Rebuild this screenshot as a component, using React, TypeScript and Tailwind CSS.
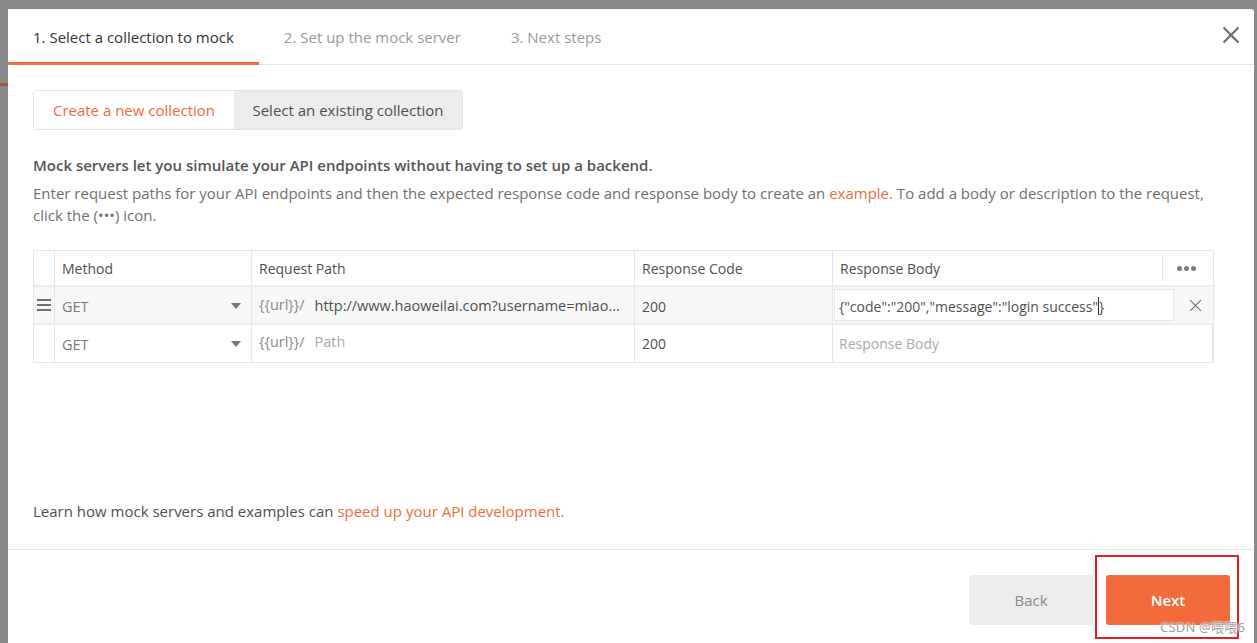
import React from "react";

const orange = "text-[#f26b3a]";

function CloseIcon({ size = 18, stroke = 2.2, color = "#6f6f6f" }: { size?: number; stroke?: number; color?: string }) {
  return (
    <svg width={size} height={size} viewBox="0 0 18 18" fill="none">
      <path d="M1.5 1.5L16.5 16.5M16.5 1.5L1.5 16.5" stroke={color} strokeWidth={stroke} strokeLinecap="butt" />
    </svg>
  );
}

function Caret() {
  return (
    <svg width="10" height="6" viewBox="0 0 10 6">
      <path d="M0 0H10L5 6Z" fill="#777" />
    </svg>
  );
}

export default function App() {
  return (
    <div
      className="relative w-[1257px] h-[643px] overflow-hidden bg-[#8a8a8a] flex pt-[9px] pl-[8px] pr-[3px]"
      style={{ fontFamily: '"Open Sans", "Noto Sans", sans-serif' }}
    >
      {/* faint backdrop hints on left strip */}
      <div className="absolute left-0 top-[83px] w-[8px] h-[3px] bg-[#a8583a]" />

      <div className="flex-1 bg-white rounded-tr-[3px] flex flex-col h-[700px]">
        {/* header tabs */}
        <div className="h-[56px] flex items-stretch border-b border-[#e6e6e6] shrink-0">
          <div className="px-[25px] flex items-center pt-[4px] border-b-[3px] border-[#f26b3a] -mb-px text-[15px] text-[#333]">
            1. Select a collection to mock
          </div>
          <div className="px-[25px] flex items-center pt-[2px] text-[15px] text-[#9a9a9a]">2. Set up the mock server</div>
          <div className="px-[25px] flex items-center pt-[2px] text-[15px] text-[#9a9a9a]">3. Next steps</div>
          <div className="flex-1" />
          <div className="flex items-center pr-[14px] pb-[3px]">
            <CloseIcon />
          </div>
        </div>

        {/* body */}
        <div className="h-[484px] px-[25px] flex flex-col shrink-0">
          <div className="mt-[25px] flex w-[430px] h-[40px] border border-[#e3e3e3] rounded-[3px] text-[15px]">
            <div className={`w-[200px] flex items-center justify-center bg-white pt-[1px] ${orange}`}>Create a new collection</div>
            <div className="flex-1 flex items-center justify-center bg-[#ececec] text-[#505050] pt-[1px]">
              Select an existing collection
            </div>
          </div>

          <div className="mt-[24px] text-[15px] font-semibold text-[#555] leading-[22px]">
            Mock servers let you simulate your API endpoints without having to set up a backend.
          </div>
          <div className="mt-[6px] text-[15px] text-[#707070] leading-[22px]">
            Enter request paths for your API endpoints and then the expected response code and response body to create an{" "}
            <span className={orange}>example.</span> To add a body or description to the request, click the (•••) icon.
          </div>

          {/* table */}
          <div className="mt-[24px] w-[1181px] border border-[#e6e6e6] text-[14px]">
            {/* header */}
            <div className="grid grid-cols-[20px_197px_383px_198px_330px_51px] h-[36px] border-b-2 border-[#ececec] text-[#505050]">
              <div />
              <div className="border-l border-[#e6e6e6] flex items-center pl-[7px]">Method</div>
              <div className="border-l border-[#e6e6e6] flex items-center pl-[7px]">Request Path</div>
              <div className="border-l border-[#e6e6e6] flex items-center pl-[7px]">Response Code</div>
              <div className="border-l border-[#e6e6e6] flex items-center pl-[7px]">Response Body</div>
              <div className="flex items-center">
                <div className="w-px h-[26px] bg-[#e6e6e6]" />
                <div className="flex-1 flex items-center justify-center gap-[2px] pr-[3px]">
                  <span className="w-[5px] h-[5px] rounded-full bg-[#7a7a7a]" />
                  <span className="w-[5px] h-[5px] rounded-full bg-[#7a7a7a]" />
                  <span className="w-[5px] h-[5px] rounded-full bg-[#7a7a7a]" />
                </div>
              </div>
            </div>
            {/* row 1 */}
            <div className="grid grid-cols-[20px_197px_383px_198px_381px] h-[38px] border-b-2 border-[#ececec] bg-[#f7f7f7]">
              <div className="flex items-center justify-center">
                <div className="flex flex-col gap-[3px]">
                  <span className="w-[14px] h-[2px] bg-[#707070]" />
                  <span className="w-[14px] h-[2px] bg-[#707070]" />
                  <span className="w-[14px] h-[2px] bg-[#707070]" />
                </div>
              </div>
              <div className="border-l border-[#e6e6e6] flex items-center pl-[7px] pr-[10px] justify-between bg-[#f7f7f7] pt-[2px]">
                <span className="text-[#7a7a7a] text-[14.5px] mt-[2px]">GET</span>
                <Caret />
              </div>
              <div className="border-l border-[#e6e6e6] flex items-center pl-[7px] pr-[4px] gap-[10px] overflow-hidden whitespace-nowrap pt-[2px]">
                <span className="text-[#8a8a8a] text-[14.5px] -mt-[3px] shrink-0">{"{{url}}/"}</span>
                <span className="text-[#505050] text-[14.5px] truncate">http://www.haoweilai.com?username=miaomiao</span>
              </div>
              <div className="border-l border-[#e6e6e6] flex items-center pl-[7px] text-[#505050] pt-[2px]">200</div>
              <div className="border-l border-[#e6e6e6] flex items-center pl-[1px]">
                <div className="w-[340px] h-[32px] bg-white border border-[#e6e6e6] flex items-center pl-[4px] pt-[2px] text-[#505050]">
                  {'{"code":"200","message":"login success"'}
                  <span className="inline-block w-px h-[18px] bg-[#333]" />
                  {"}"}
                </div>
                <div className="flex-1 flex items-center justify-center pl-[4px]">
                  <CloseIcon size={13} stroke={1.6} color="#707070" />
                </div>
              </div>
            </div>
            {/* row 2 */}
            <div className="grid grid-cols-[20px_197px_383px_198px_381px] h-[37px] bg-white">
              <div />
              <div className="border-l border-[#e6e6e6] flex items-center pl-[7px] pr-[10px] justify-between">
                <span className="text-[#7a7a7a] text-[14.5px] mt-[2px]">GET</span>
                <Caret />
              </div>
              <div className="border-l border-[#e6e6e6] flex items-center pl-[7px] gap-[10px]">
                <span className="text-[#8a8a8a] text-[14.5px] -mt-[3px]">{"{{url}}/"}</span>
                <span className="text-[#aaaaaa] text-[14.5px] -mt-[3px]">Path</span>
              </div>
              <div className="border-l border-[#e6e6e6] flex items-center pl-[7px] text-[#505050]">200</div>
              <div className="border-l border-[#e6e6e6] flex items-center pl-[6px] text-[#aaaaaa] border-r">Response Body</div>
            </div>
          </div>

          <div className="flex-1" />
          <div className="pb-[28px] text-[15px] leading-[20px] text-[#505050]">
            Learn how mock servers and examples can <span className={orange}>speed up your API development.</span>
          </div>
        </div>

        {/* footer */}
        <div className="border-t border-[#e6e6e6] flex justify-end gap-[13px] pt-[25px] pr-[24px]">
          <div className="w-[124px] h-[50px] rounded-[3px] bg-[#ececec] text-[#8a8a8a] text-[15px] flex items-center justify-center">
            Back
          </div>
          <div className="w-[124px] h-[50px] rounded-[3px] bg-[#f26b3a] text-white text-[15px] font-semibold flex items-center justify-center">
            Next
          </div>
        </div>
      </div>

      {/* annotation */}
      <div className="absolute left-[1095px] top-[555px] w-[144px] h-[84px] border-2 border-[#e81c24]" />
      <div
        className="absolute left-[1160px] top-[618px] text-[13px] text-[#a0a0a0] tracking-[0.2px]"
        style={{ fontFamily: '"Noto Sans", "Noto Sans CJK SC", sans-serif', textShadow: "0 0 2px #fff, 0 0 2px #fff" }}
      >
        CSDN @喂喂6
      </div>
    </div>
  );
}
